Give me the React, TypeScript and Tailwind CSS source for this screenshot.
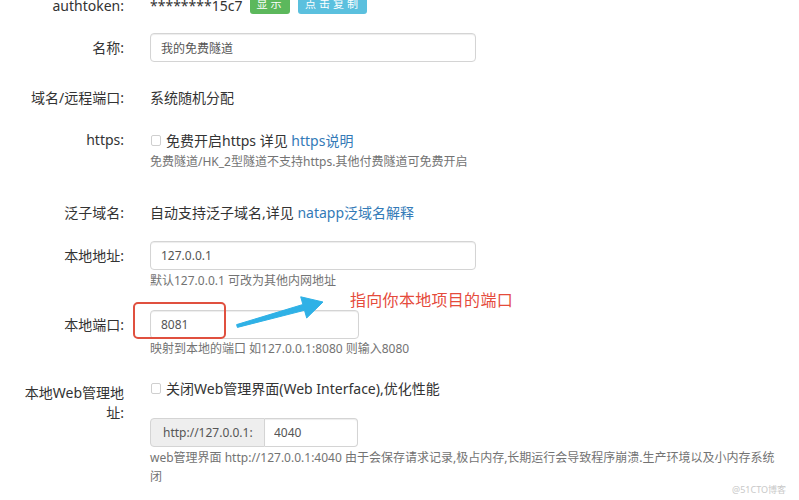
import React from "react";

function Label({ children, className = "" }: { children: React.ReactNode; className?: string }) {
  return (
    <div className={`w-[124px] shrink-0 pl-[10px] text-right text-[14px] text-[#333] ${className}`}>
      {children}
    </div>
  );
}

function Check() {
  return (
    <span className="ml-[1px] mr-[5px] inline-block h-[11px] w-[10px] shrink-0 rounded-[2px] border border-[#cfcfcf] bg-white" />
  );
}

function Help({ children, className = "" }: { children: React.ReactNode; className?: string }) {
  return <div className={`text-[12px] leading-[18px] text-[#737373] ${className}`}>{children}</div>;
}

const inputCls =
  "h-[29px] rounded-[4px] border border-[#d4d4d4] bg-white px-[10px] text-[12px] text-[#555] shadow-[inset_0_1px_1px_rgba(0,0,0,0.075)] outline-none";

export default function App() {
  return (
    <div className="relative h-[500px] w-[799px] overflow-hidden bg-white font-['Noto_Sans','Noto_Sans_CJK_SC',sans-serif] text-[#333]">
      <div className="flex flex-col">
        {/* authtoken */}
        <div className="-mt-[4px] flex h-[20px] items-start">
          <Label className="leading-[20px]">authtoken:</Label>
          <div className="ml-[26px] flex items-start">
            <span className="text-[14px] leading-[20px]">********15c7</span>
            <span className="ml-[8px] -mt-[2px] flex h-[20px] w-[40px] items-center justify-center rounded-[3px] bg-[#5cb85c] text-[11px] tracking-[3px] text-white">
              显示
            </span>
            <span className="ml-[8px] -mt-[2px] flex h-[20px] w-[69px] items-center justify-center rounded-[3px] bg-[#5bc0de] text-[11px] tracking-[3px] text-white">
              点击复制
            </span>
          </div>
        </div>

        {/* 名称 */}
        <div className="mt-[17px] flex h-[29px] items-center">
          <Label>名称:</Label>
          <div className="ml-[26px]">
            <input readOnly value="我的免费隧道" className={`${inputCls} w-[326px]`} />
          </div>
        </div>

        {/* 域名/远程端口 */}
        <div className="mt-[26px] flex items-start">
          <Label className="leading-[20px]">域名/远程端口:</Label>
          <div className="ml-[26px] text-[14px] leading-[20px]">系统随机分配</div>
        </div>

        {/* https */}
        <div className="mt-[22px] flex items-start">
          <Label className="leading-[20px]">https:</Label>
          <div className="ml-[26px]">
            <div className="flex h-[20px] items-center text-[14px]">
              <Check />
              <span>
                免费开启https 详见 <span className="text-[#337ab7]">https说明</span>
              </span>
            </div>
            <Help className="mt-[3px]">免费隧道/HK_2型隧道不支持https.其他付费隧道可免费开启</Help>
          </div>
        </div>

        {/* 泛子域名 */}
        <div className="mt-[32px] flex items-start">
          <Label className="leading-[20px]">泛子域名:</Label>
          <div className="ml-[26px] text-[14px] leading-[20px]">
            自动支持泛子域名,详见 <span className="text-[#337ab7]">natapp泛域名解释</span>
          </div>
        </div>

        {/* 本地地址 */}
        <div className="mt-[18px] flex items-start">
          <Label className="leading-[29px]">本地地址:</Label>
          <div className="ml-[26px]">
            <input readOnly value="127.0.0.1" className={`${inputCls} block w-[326px]`} />
            <Help className="mt-[2px]">默认127.0.0.1 可改为其他内网地址</Help>
          </div>
        </div>

        {/* 本地端口 */}
        <div className="mt-[20px] flex items-start">
          <Label className="leading-[29px]">本地端口:</Label>
          <div className="ml-[26px]">
            <input readOnly value="8081" className={`${inputCls} block w-[209px]`} />
            <Help className="mt-[1px]">映射到本地的端口 如127.0.0.1:8080 则输入8080</Help>
          </div>
        </div>

        {/* 本地Web管理地址 */}
        <div className="mt-[20px] flex items-start">
          <Label className="pt-[5px] leading-[20px]">本地Web管理地址:</Label>
          <div className="ml-[26px]">
            <div className="flex h-[20px] items-center text-[14px]">
              <Check />
              <span>关闭Web管理界面(Web Interface),优化性能</span>
            </div>
            <div className="mt-[20px] flex h-[29px] w-[208px]">
              <div className="flex w-[115px] shrink-0 items-center rounded-l-[4px] border border-[#d4d4d4] bg-[#eeeeee] pl-[12px] text-[12px] text-[#555]">
                http://127.0.0.1:
              </div>
              <input
                readOnly
                value="4040"
                className="h-[29px] w-[93px] rounded-r-[4px] border border-l-0 border-[#d4d4d4] bg-white px-[9px] text-[12px] text-[#555] shadow-[inset_0_1px_1px_rgba(0,0,0,0.075)] outline-none"
              />
            </div>
            <div className="mt-[1px] text-[12px] leading-[19px] text-[#737373]">
              web管理界面 http://127.0.0.1:4040 由于会保存请求记录,极占内存,长期运行会导致程序崩溃.生产环境以及小内存系统
              <br />闭
            </div>
          </div>
        </div>
      </div>

      {/* annotations */}
      <div className="absolute left-[133px] top-[302px] h-[37px] w-[93px] rounded-[5px] border-2 border-[#e0503f]" />
      <svg className="absolute left-[230px] top-[290px]" width="100" height="45" viewBox="0 0 100 45">
        <polygon
          points="6.6,34.6 72.9,14.5 70.7,6.8 93,12 76.7,28 74.5,20.3 7.4,37.4"
          fill="#2fb1e6"
          stroke="#2fb1e6"
          strokeWidth="1"
          strokeLinejoin="round"
        />
      </svg>
      <div className="absolute left-[350px] top-[290px] text-[16px] leading-[20px] tracking-[0.3px] text-[#e54b3c]">
        指向你本地项目的端口
      </div>
      <div className="absolute bottom-[4px] right-[13px] text-[9px] text-[#c8c8c8]">@51CTO博客</div>
    </div>
  );
}
